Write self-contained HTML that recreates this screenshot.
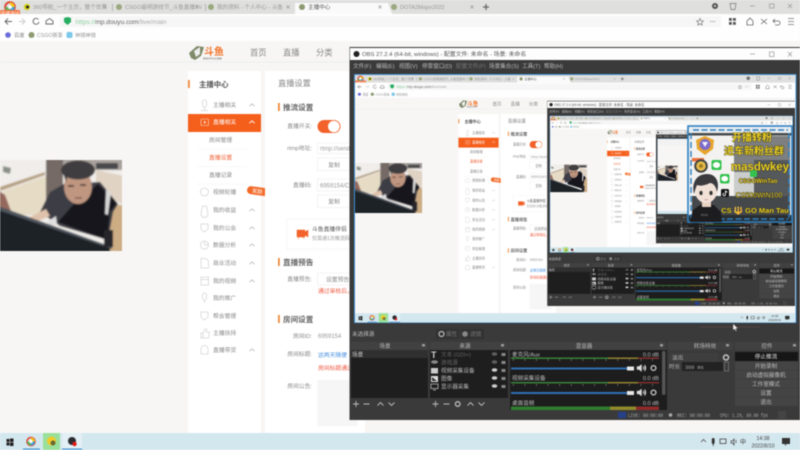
<!DOCTYPE html>
<html><head><meta charset="utf-8"><title>OBS</title>
<style>
html,body{margin:0;padding:0;width:800px;height:450px;overflow:hidden;background:#f7f6f5}
svg{display:block;filter:blur(.55px)}
text{font-family:"Liberation Sans","Noto Sans CJK SC",sans-serif;font-size:5.8px;fill:#888}
.m{text-anchor:middle}.e{text-anchor:end}
.b{font-weight:700}
.h{font-size:7.6px;font-weight:700;fill:#666}
.w{fill:#fff}
.o{fill:#bdbdbd;font-size:5.6px}
.d{fill:#777;font-size:5.6px}
.c{font-family:"Liberation Mono","Noto Sans CJK SC",monospace;fill:#aaa;font-size:5.2px}
.g{font-weight:700;fill:#f0d420;stroke:#222;stroke-width:.7px;paint-order:stroke}
.l{fill:none;stroke:#999;stroke-width:.7}
.k{fill:none;stroke:#bbb;stroke-width:.7}
.y{fill:none;stroke:#ddd;stroke-width:.9}
</style></head><body>
<svg width="800" height="450" viewBox="0 0 800 450" xmlns="http://www.w3.org/2000/svg">
<defs>
<filter id="soft" x="-2%" y="-2%" width="104%" height="104%"><feGaussianBlur stdDeviation=".9"/></filter>
<clipPath id="phc"><rect x="0" y="160" width="122" height="91"/></clipPath>
<path id="ch" d="M-2.6 1.2L0-1.2 2.6 1.2" fill="none" stroke="#bbb" stroke-width=".8"/>
<g id="ic"><circle r="3.6" fill="none" stroke="#ccc" stroke-width=".8"/></g>
<g id="ring"><circle r="4" fill="none" stroke="#e04030" stroke-width="1.6"/><path d="M0 0L0-4A4 4 0 0 1 4 0Z" fill="#f5c518"/><path d="M0 0L4 0A4 4 0 0 1 0 4Z" fill="#3aa5e0"/><path d="M0 0L0 4A4 4 0 0 1-4 0Z" fill="#5cb85c"/><circle r="1.6" fill="#fff"/></g>

<g id="ph" clip-path="url(#phc)"><g filter="url(#soft)">
<rect x="-2" y="158" width="126" height="95" fill="#f0edea"/>
<rect x="1" y="163" width="13" height="15" fill="#f1efea" transform="rotate(-10 7 170)"/>
<path d="M3 166l8 2-1 6-7-2z" fill="#8a9088"/>
<path d="M0 187L45 172V175L0 191Z" fill="#b5a083"/>
<path d="M3 191L46 176V215L3 215Z" fill="#e6dcc6"/>
<path d="M-2 190L5 195L11 211L-2 207Z" fill="#94675c"/>
<rect x="46" y="158" width="17" height="44" fill="#746a65"/>
<rect x="63" y="158" width="60" height="12" fill="#a9a29c"/>
<rect x="96" y="163" width="22" height="6" fill="#4a494b"/>
<path d="M96 170L124 176V205L96 190Z" fill="#e0d3c4"/>
<path d="M106 205H124V253H106Z" fill="#cdad84"/>
<path d="M40 212L50 192L64 184L100 182L118 204L113 212L108 240L60 226Z" fill="#3c3d44"/>
<path d="M72 206L98 184L117 203L110 212L107 240L58 222Z" fill="#15161a"/>
<path d="M106 190L111 192L108 215L105 214Z" fill="#d8d8d8"/>
<path d="M28 218L46 209L50 216L36 222Z" fill="#dfc2ac"/>
<path d="M47 222L56 216L57 224L50 226Z" fill="#e0e0e0"/>
<ellipse cx="78" cy="187" rx="14" ry="17" fill="#bf9680"/>
<ellipse cx="78" cy="170" rx="17" ry="9.500" fill="#3f3e41"/>
<path d="M62 170L66 182L68 172Z" fill="#3f3e41"/>
<path d="M68 186h6M80 185h6" stroke="#3a2a26" stroke-width="1.500"/>
<path d="M75 198h7" stroke="#6e4a42" stroke-width="1.200"/>
<path d="M-2 208L110 247V253H-2Z" fill="#1d2026"/>
<path d="M-2 206L112 247V249L-2 210Z" fill="#4e555d"/>
<rect x="104" y="230" width="9" height="17" fill="#26272b"/>
</g></g>

<g id="pg">
<rect width="800" height="450" fill="#f7f6f5"/>
<!-- tabs -->
<rect width="800" height="14" fill="#dfdfde"/>
<path d="M295 14V3H388L392 14Z" fill="#fafafa"/>
<g fill="#aaa"><rect x="112" y="4" width=".8" height="7"/><rect x="205" y="4" width=".8" height="7"/></g>
<use href="#ring" transform="translate(10 7) scale(1.2)"/>
<rect x="0" y="10" width="20" height="6" rx="1" fill="#f0703a"/><text x="10" y="15" class="m w" style="font-size:4.6px">直播测试</text>
<circle cx="27" cy="7" r="3.200" fill="#d6d21c"/><circle cx="27.500" cy="7" r="1.500" fill="#222"/>
<text x="33" y="9.200" style="font-size:5.6px;fill:#999">360导航_一个主页，整个世界</text>
<path d="M103.500 5.500l3 3m0-3l-3 3" class="l"/>
<circle cx="119" cy="7" r="3" fill="#9aa97f"/>
<text x="125" y="9.200" style="font-size:5.6px;fill:#999">CSGO最明游技节_斗鱼直播TV</text>
<path d="M195.500 5.500l3 3m0-3l-3 3" class="l"/>
<circle cx="211" cy="7" r="3" fill="#9aa97f"/>
<text x="217" y="9.200" style="font-size:5.6px;fill:#999">我的资料 - 个人中心 - 斗鱼</text>
<path d="M286.500 5.500l3 3m0-3l-3 3" class="l"/>
<circle cx="302" cy="7" r="3" fill="#8d9a72"/>
<text x="308" y="9.200" style="font-size:5.6px;fill:#555">主播中心</text>
<path d="M378.500 5.500l3 3m0-3l-3 3" class="l"/>
<circle cx="394" cy="7" r="3" fill="#9aa97f"/>
<text x="400" y="9.200" style="font-size:5.6px;fill:#999">DOTA2Major2022</text>
<path d="M470.500 5.500l3 3m0-3l-3 3" class="l"/>
<path d="M483 7h6M486 4v6" stroke="#666" stroke-width="1.200" fill="none"/>
<circle cx="715" cy="6" r="3" fill="#555"/><circle cx="715" cy="6" r="1" fill="#ddd"/>
<path d="M730 3.500h6l-1 6h-4z" fill="none" stroke="#777" stroke-width=".7"/>
<path d="M750 6h5" class="l"/><rect x="769.500" y="4" width="4.500" height="4" class="l"/><path d="M788 4l4 4m0-4l-4 4" class="l"/>
<!-- address -->
<rect y="14" width="800" height="14" fill="#fefefe"/>
<rect x="60" y="16" width="661" height="11" fill="#f6f6f6"/>
<path d="M12 21.500H5M8 18.500L5 21.500L8 24.500" fill="none" stroke="#666" stroke-width=".9"/>
<path d="M25 21.500H19M22 18.500L25 21.500L22 24.500" fill="none" stroke="#ccc" stroke-width=".9"/>
<path d="M38.500 19.500A3 3 0 1 0 39 22" fill="none" stroke="#666" stroke-width=".9"/>
<path d="M46 24v-3l3.500-2.500L53 21v3z" fill="none" stroke="#666" stroke-width=".9"/>
<path d="M64 18l3.500-1 3.500 1v4l-3.500 3-3.500-3z" fill="#27ae60"/>
<text x="75.500" y="24" style="font-size:6.600px;fill:#aaa"><tspan style="fill:#8fd0a0;font-size:6.600px">https://</tspan><tspan style="fill:#666;font-size:6.600px">mp.douyu.com</tspan>/live/main</text>
<path d="M700 18.500l1 2.200 2.400.3-1.800 1.600.5 2.400-2.100-1.200-2.100 1.200.5-2.400-1.800-1.600 2.400-.3z" fill="none" stroke="#777" stroke-width=".7"/>
<path d="M710 21.500h6" stroke="#888" stroke-width=".9" stroke-dasharray="1 1"/>
<g fill="#555"><rect x="729" y="18" width="2.800" height="2.800"/><rect x="733" y="18" width="2.800" height="2.800"/><rect x="729" y="22" width="2.800" height="2.800"/><rect x="733" y="22" width="2.800" height="2.800"/></g>
<path d="M747 25v-4l3-3 3 3v4z" fill="none" stroke="#666" stroke-width=".8"/>
<path d="M761 19l6 5m0-5l-6 5" fill="none" stroke="#666" stroke-width=".8"/>
<path d="M775 19l-2 2 2 2M773 21h5a2 2 0 0 1 0 4h-3" fill="none" stroke="#666" stroke-width=".8"/>
<path d="M788 18.500h6M788 21.500h6M788 24.500h6" fill="none" stroke="#777" stroke-width=".8"/>
<!-- bookmarks -->
<rect y="28" width="800" height="13" fill="#fefefe"/>
<circle cx="8" cy="35" r="2.800" fill="#6a6ad8"/><text x="14" y="37" style="fill:#888;font-size:5.200px">百度</text>
<circle cx="31.500" cy="35" r="3" fill="#8d9a72"/><text x="37" y="37" style="fill:#999;font-size:5.200px">CSGO赛事</text>
<rect x="66.500" y="32" width="6" height="6" rx="1.500" fill="#7cc8ea"/><text x="75" y="37" style="fill:#999;font-size:5.200px">神镜神镜</text>
<!-- header -->
<path d="M0 62H800" stroke="#ebebeb" stroke-width=".8"/>
<path d="M189 53L197 46L204 47L201 56L195 60L191 58Z" fill="#7f8a6a"/><path d="M194 51L200 47L200 54L196 57Z" fill="#eee"/>
<text x="204" y="55" class="b" style="font-size:10px;fill:#f2762d">斗鱼</text>
<text x="203" y="59.500" class="b" style="font-size:3px;fill:#777">DOUYU.COM</text>
<text x="250" y="55.500" style="font-size:8.300px;fill:#888">首页</text>
<text x="283" y="55.500" style="font-size:8.300px;fill:#888">直播</text>
<text x="316" y="55.500" style="font-size:8.300px;fill:#888">分类</text>
<!-- sidebar -->
<rect x="188" y="71" width="73" height="362" fill="#fff"/>
<rect x="188" y="80" width="1.800" height="8" fill="#f08a3c"/>
<text x="199" y="87" class="b" style="font-size:7.400px;fill:#555">主播中心</text>
<g><rect x="188" y="114" width="73" height="18" fill="#f55f1c"/>
<rect x="201" y="119" width="7.500" height="6.500" rx="1" fill="none" stroke="#fff" stroke-width=".6" opacity=".8"/>
<path d="M204 120.500l2.200 1.700-2.200 1.700z" fill="#fff" opacity=".8"/>
<path d="M-2.600 1.200L0-1.200 2.600 1.200" transform="translate(252 122)" fill="none" stroke="#fff" stroke-width=".9"/></g>
<g>
<text x="213" y="107">主播相关</text><use href="#ch" x="252" y="105"/>
<text x="213" y="124.200" class="w">直播相关</text>
<text x="209" y="142">房间管理</text>
<text x="209" y="159.500" style="fill:#f0653a">直播设置</text>
<text x="209" y="177">直播记录</text>
<text x="213" y="194">视频轮播</text>
<text x="213" y="212">我的收益</text><use href="#ch" x="252" y="210"/>
<text x="213" y="230">我的公会</text><use href="#ch" x="252" y="228"/>
<text x="213" y="247">数据分析</text><use href="#ch" x="252" y="245"/>
<text x="213" y="265">商业活动</text><use href="#ch" x="252" y="263"/>
<text x="213" y="283">我的视频</text><use href="#ch" x="252" y="281"/>
<text x="213" y="300">我的推广</text>
<text x="213" y="318">帮会管理</text>
<text x="213" y="335">主播扶持</text>
<text x="213" y="352">直播带货</text><use href="#ch" x="252" y="350"/>
</g>
<path d="M197 149h50M197 166.500h50M197 184h50" stroke="#f3f3f3" stroke-width=".6"/>
<g fill="none" stroke="#d5d5d5" stroke-width=".8">
<rect x="202.500" y="100" width="4" height="7" rx="2"/><path d="M204.500 107v3M201 110.500h7"/>
<circle cx="204.500" cy="192" r="4"/>
<path d="M202.500 206h4l1.500 8a3 3 0 0 1-7 0z"/>
<path d="M201 224h7v5l-3.500 3-3.500-3z"/>
<circle cx="204.500" cy="245" r="4"/><path d="M204.500 245v-4M204.500 245h4"/>
<path d="M201 258.500h5l2.500 2.500v7h-7.500z"/>
<rect x="201" y="277" width="7.500" height="8"/><path d="M201 279.500h7.500"/>
<rect x="202.500" y="293" width="4" height="7" rx="2"/><path d="M204.500 300v3"/>
<path d="M201 312h7v5l-3.500 3-3.500-3z"/>
<path d="M201 333h2v5h-2zM203 333l2-4h1.500v3h3l-1 6h-5.500z"/>
<path d="M201 354v-5a3.500 3.500 0 0 1 7 0v5z"/>
</g>
<g transform="rotate(8 257 190.500)"><rect x="247" y="187" width="21" height="8" rx="4" fill="#f36a28"/><text x="257.500" y="193" class="m w" style="font-size:5.200px">奖励</text></g>
<!-- content -->
<rect x="265" y="71" width="100" height="362" fill="#fff"/>
<text x="278" y="86" style="font-size:8.200px;fill:#888">直播设置</text>
<rect x="278" y="103" width="1.800" height="8" fill="#ee8a3a"/><text x="283" y="110" class="h">推流设置</text>
<text x="312" y="128" class="e">直播开关:</text>
<rect x="317.500" y="120" width="23" height="13" rx="6.500" fill="#f2622a"/><circle cx="333.800" cy="126.500" r="5.800" fill="#fff"/>
<text x="312" y="150" class="e">rtmp地址:</text>
<rect x="317.500" y="143" width="60" height="10.500" fill="#fff" stroke="#eee" stroke-width=".7"/>
<text x="320" y="150.500" style="font-size:6px;fill:#999">rtmp://send1.douyu.com</text>
<rect x="317.500" y="158" width="33" height="12.500" fill="#fff" stroke="#eee" stroke-width=".7"/><text x="334" y="167" class="m">复制</text>
<text x="312" y="187" class="e">直播码:</text>
<rect x="317.500" y="179" width="60" height="12" fill="#fff" stroke="#eee" stroke-width=".7"/>
<text x="320" y="187.500" style="font-size:6px;fill:#999">6959154/CvSd</text>
<rect x="317.500" y="195" width="33" height="12.500" fill="#fff" stroke="#eee" stroke-width=".7"/><text x="334" y="203.500" class="m">复制</text>
<rect x="287" y="219" width="90" height="30" fill="#fff" stroke="#f2f2f2" stroke-width=".7"/>
<path d="M297 230h8v7h-8zM305 232l3-2v7l-3-2zM299 237l-1 2M303 237l1 2" fill="#f2622a" stroke="#f2622a" stroke-width=".5"/>
<text x="312" y="231" style="font-size:5.800px;fill:#555">斗鱼直播伴侣</text>
<text x="312" y="240" style="font-size:5px;fill:#999">仅需通1次推流码</text>
<rect x="278" y="258" width="1.800" height="8" fill="#ee8a3a"/><text x="283" y="265" class="h">直播预告</text>
<text x="312" y="281" class="e">直播预告:</text>
<rect x="317.500" y="273" width="40" height="12" fill="#fff" stroke="#eee" stroke-width=".7"/><text x="326" y="281.500">设置预告</text>
<text x="318" y="293" style="fill:#ee5a40">通过审核后，</text>
<rect x="278" y="315" width="1.800" height="8" fill="#ee8a3a"/><text x="283" y="322" class="h">房间设置</text>
<text x="312" y="338" class="e">房间ID:</text><text x="318" y="338" style="font-size:6px;fill:#999">6959154</text>
<text x="312" y="356" class="e">房间标题:</text><text x="318" y="357" style="fill:#4a90e2">这两天随便</text>
<text x="318" y="370" style="fill:#ee5a40">房间标题通过</text>
<text x="312" y="388" class="e">房间公告:</text>
<rect x="317.500" y="380" width="40" height="46" fill="#f6f6f6"/>
<use href="#ph"/>
<!-- taskbar -->
<rect y="433" width="800" height="17" fill="#d3e7ee"/>
<g fill="#222"><rect x="6.500" y="439" width="3" height="3"/><rect x="10" y="438.500" width="3.500" height="3.500"/><rect x="6.500" y="442.500" width="3" height="3"/><rect x="10" y="442.500" width="3.500" height="3.500"/></g>
<use href="#ring" transform="translate(31 441.500)"/><rect x="23" y="448.500" width="17" height="1.200" fill="#3f8fd0"/>
<rect x="43" y="433" width="17" height="17" fill="#9ae09a"/><circle cx="51.500" cy="441" r="4.500" fill="#f1cb2a"/><circle cx="53" cy="443" r="2.500" fill="#6a6a30"/>
<rect x="62" y="433" width="20" height="17" fill="#e2eff4"/><circle cx="72" cy="441" r="4" fill="#2b2b30"/><circle cx="74.500" cy="444" r="2.200" fill="#e01818"/><rect x="62" y="448.500" width="20" height="1.200" fill="#3f8fd0"/>
<path d="M701 442l2.500-2.500 2.500 2.500" fill="none" stroke="#555" stroke-width=".8"/>
<rect x="711.800" y="438" width="2.800" height="6" rx="1.400" fill="#333"/><path d="M713.200 444v2" stroke="#333" stroke-width=".8"/>
<rect x="720" y="439" width="6" height="4.500" fill="none" stroke="#444" stroke-width=".8"/>
<path d="M731 441h1.500l1.500-2v6l-1.500-2H731zM735.500 440a2 2 0 0 1 0 3" fill="none" stroke="#444" stroke-width=".7"/>
<text x="743" y="444" class="m" style="fill:#333;font-size:6px">中</text>
<text x="763" y="440" class="m" style="fill:#444;font-size:5.200px">14:38</text>
<text x="763" y="447.500" class="m" style="fill:#444;font-size:5.200px">2022/8/10</text>
<path d="M782 438h8v6h-3.500l-1.500 2v-2h-3z" fill="#333"/>
</g>

<g id="ob">
<rect x="349.500" y="47" width="450.500" height="373" fill="#3a3a3a"/>
<rect x="350" y="48" width="450" height="12" fill="#fdfdfd"/>
<circle cx="356.500" cy="54" r="3" fill="#222"/>
<text x="362" y="56.200" style="font-size:5.900px;fill:#555">OBS 27.2.4 (64-bit, windows) - 配置文件: 未命名 - 场景: 未命名</text>
<path d="M750 54h5" class="l"/><rect x="769.500" y="52" width="4.500" height="4.500" class="l"/><path d="M788 52l4 4.500m0-4.500l-4 4.500" class="l"/>
<text x="353" y="68.200" class="o">文件(F)</text><text x="376" y="68.200" class="o">编辑(E)</text><text x="399" y="68.200" class="o">视图(V)</text><text x="422" y="68.200" class="o">停靠窗口(D)</text><text x="456" y="68.200" class="d">配置文件(P)</text><text x="489" y="68.200" class="o">场景集合(S)</text><text x="522" y="68.200" class="o">工具(T)</text><text x="544" y="68.200" class="o">帮助(H)</text>
<rect x="354.500" y="74.500" width="441.500" height="248" fill="#f7f6f5" stroke="#3f8fd0"/>
<text x="352" y="336" class="o">未选择源</text>
<rect x="436" y="329" width="23" height="10" fill="#333"/><rect x="461" y="329" width="23" height="10" fill="#333"/>
<circle cx="441.500" cy="334" r="2.500" fill="none" stroke="#bbb" stroke-width="1.200"/><text x="446" y="336" class="d">属性</text>
<circle cx="465" cy="334" r="2.800" fill="#888"/><text x="470" y="336" class="d">滤镜</text>
<rect x="351" y="342" width="77" height="8" fill="#414141"/><rect x="430" y="342" width="78" height="8" fill="#414141"/><rect x="509" y="342" width="157" height="8" fill="#414141"/><rect x="668" y="342" width="65" height="8" fill="#414141"/><rect x="735" y="342" width="65" height="8" fill="#414141"/>
<text x="385" y="348" class="m o">场景</text><text x="465" y="348" class="m o">来源</text><text x="584" y="348" class="m o">混音器</text><text x="705" y="348" class="m o">转场特效</text><text x="767" y="348" class="m o">控件</text>
<g fill="#999"><rect x="422" y="344" width="3" height="2.500"/><rect x="501" y="344" width="3" height="2.500"/><rect x="660" y="344" width="3" height="2.500"/><rect x="726" y="344" width="3" height="2.500"/><rect x="793" y="344" width="3" height="2.500"/></g>
<!-- scenes -->
<rect x="351" y="350" width="77" height="48" fill="#1e1e1e"/><rect x="351" y="350" width="77" height="8" fill="#303030"/>
<text x="352" y="356.300" style="fill:#ccc;font-size:5.600px">场景</text>
<path d="M353 404h6M356 401v6M363.500 404h6M377.500 405.500l3-3 3 3M388.500 402.500l3 3 3-3" fill="none" stroke="#bbb" stroke-width=".9"/>
<!-- sources -->
<rect x="430" y="350" width="78" height="48" fill="#1e1e1e"/>
<text x="431" y="358" class="b" style="font-size:9px;fill:#ccc">T</text>
<text x="441" y="356.300" style="fill:#666;font-size:5.600px">文本 (GDI+)</text>
<text x="441" y="364.300" style="fill:#666;font-size:5.600px">游戏源</text>
<text x="441" y="372.300" style="fill:#bbb;font-size:5.600px">视频采集设备</text>
<text x="441" y="380.300" style="fill:#bbb;font-size:5.600px">图像</text>
<text x="441" y="388.300" style="fill:#bbb;font-size:5.600px">显示器采集</text>
<ellipse cx="434.500" cy="362" rx="3.500" ry="1.800" fill="#888"/>
<rect x="431" y="368" width="7" height="5.500" fill="#ccc"/><rect x="431" y="376" width="7" height="6" fill="#ddd"/><path d="M432 377l5 4h-5z" fill="#333"/>
<rect x="431" y="384" width="7" height="4.500" fill="none" stroke="#ccc" stroke-width=".7"/><path d="M433 390h3" stroke="#ccc" stroke-width=".7"/>
<g fill="#888"><ellipse cx="494.500" cy="354" rx="2.800" ry="1.700" opacity=".6"/><ellipse cx="494.500" cy="362" rx="2.800" ry="1.700" opacity=".6"/><ellipse cx="494.500" cy="370" rx="2.800" ry="1.700" fill="#ccc"/><ellipse cx="494.500" cy="378" rx="2.800" ry="1.700" fill="#ccc"/><ellipse cx="494.500" cy="386" rx="2.800" ry="1.700" fill="#ccc"/>
<rect x="501.500" y="353" width="4" height="3"/><rect x="501.500" y="361" width="4" height="3"/><rect x="501.500" y="369" width="4" height="3"/><rect x="501.500" y="377" width="4" height="3"/><rect x="501.500" y="385" width="4" height="3"/></g>
<path d="M432.500 404h6M435.500 401v6M443.500 404h6M467.500 405.500l3-3 3 3M478.500 402.500l3 3 3-3" fill="none" stroke="#bbb" stroke-width=".9"/>
<circle cx="457.700" cy="404" r="2.300" fill="none" stroke="#bbb" stroke-width="1.300"/>
<!-- mixer -->
<rect x="510" y="350" width="157" height="60" fill="#1d1d1d"/>
<rect x="662" y="351" width="3.500" height="44" rx="1.500" fill="#555"/>
<text x="512" y="356.300" class="o">麦克风/Aux</text><text x="659" y="356.300" class="e o">0.0 dB</text>
<rect x="511" y="357.500" width="97" height="1.400" fill="#3a8a3a"/><rect x="608" y="357.500" width="30" height="1.400" fill="#9a8a30"/><rect x="638" y="357.500" width="21" height="1.400" fill="#8a3030"/>
<path d="M513 360h146" stroke="#888" stroke-width="2" stroke-dasharray=".6 11"/>
<rect x="511" y="367.500" width="117" height="2" fill="#2f6fb5"/><rect x="627" y="366.500" width="7" height="4" fill="#e8e8e8"/>
<path d="M637 366.500h2l2.500-2v7l-2.500-2h-2zM643 366a3 3 0 0 1 0 4M644.500 364.500a5 5 0 0 1 0 7" fill="#ddd" stroke="#ddd" stroke-width=".4"/>
<circle cx="653.500" cy="368" r="2.400" fill="none" stroke="#ccc" stroke-width="1.300"/>
<text x="512" y="380" class="o">视频采集设备</text><text x="659" y="380" class="e o">0.0 dB</text>
<rect x="511" y="382" width="97" height="1.400" fill="#3a8a3a"/><rect x="608" y="382" width="30" height="1.400" fill="#9a8a30"/><rect x="638" y="382" width="21" height="1.400" fill="#8a3030"/>
<path d="M513 385h146" stroke="#888" stroke-width="2" stroke-dasharray=".6 11"/>
<rect x="511" y="392" width="117" height="2" fill="#2f6fb5"/><rect x="627" y="391" width="7" height="4" fill="#e8e8e8"/>
<path d="M637 391h2l2.500-2v7l-2.500-2h-2zM643 390.500a3 3 0 0 1 0 4M644.500 389a5 5 0 0 1 0 7" fill="#ddd" stroke="#ddd" stroke-width=".4"/>
<circle cx="653.500" cy="392.500" r="2.400" fill="none" stroke="#ccc" stroke-width="1.300"/>
<text x="512" y="405" class="o">桌面音频</text><text x="659" y="405" class="e o">0.0 dB</text>
<rect x="511" y="406.500" width="99" height="3.500" fill="#2f7d2f"/><rect x="610" y="406.500" width="26" height="3.500" fill="#8f8a2a"/><rect x="636" y="406.500" width="23" height="3.500" fill="#8f2a2a"/>
<!-- transitions -->
<rect x="669" y="353" width="49" height="9" fill="#3e3e3e"/><text x="672" y="359.700" class="o">淡出</text>
<circle cx="726" cy="357.500" r="2.500" fill="none" stroke="#ccc" stroke-width="1.400"/>
<text x="669" y="368.700" class="o">时长</text>
<rect x="682" y="362" width="41" height="9" fill="#222"/><text x="685" y="368.800" class="c">300 ms</text>
<rect x="724.500" y="362" width="4" height="9" fill="none" stroke="#888" stroke-width=".6"/>
<!-- controls -->
<rect x="735" y="352" width="63" height="9" fill="#161616"/><text x="766" y="358.600" class="m o" style="fill:#e4e4e4">停止推流</text>
<g fill="#444"><rect x="735" y="361.500" width="63" height="8.500"/><rect x="735" y="370.500" width="63" height="8.500"/><rect x="735" y="379.500" width="63" height="8.500"/><rect x="735" y="388.500" width="63" height="8.500"/><rect x="735" y="397.500" width="63" height="8.500"/></g>
<text x="766" y="367.800" class="m o">开始录制</text><text x="766" y="376.800" class="m o">启动虚拟摄像机</text><text x="766" y="385.800" class="m o">工作室模式</text><text x="766" y="394.800" class="m o">设置</text><text x="766" y="403.800" class="m o">退出</text>
<!-- status -->
<rect x="618" y="412" width="8" height="6" fill="#27408a"/>
<text x="628" y="417" class="c" textLength="35" lengthAdjust="spacingAndGlyphs">LIVE: 00:00:00</text><circle cx="670.500" cy="415" r="1.800" fill="#aaa"/><text x="677" y="417" class="c" textLength="33" lengthAdjust="spacingAndGlyphs">REC: 00:00:00</text><text x="720" y="417" class="c" textLength="48" lengthAdjust="spacingAndGlyphs">CPU: 1.2%, 60.00 fps</text>
<rect x="778" y="411" width="8" height="8" fill="#444"/>
</g>

<g id="l4">
<rect width="800" height="450" fill="#f7f6f5"/><rect width="800" height="41" fill="#f2f2f2"/>
<rect x="188" y="71" width="73" height="362" fill="#fff"/><rect x="188" y="114" width="73" height="18" fill="#f55f1c"/>
<rect x="265" y="71" width="85" height="362" fill="#fff"/>
<use href="#ph"/>
<rect y="433" width="800" height="17" fill="#d3e7ee"/>
<rect x="350" y="47" width="450" height="373" fill="#3a3a3a"/><rect x="355" y="75" width="441" height="247" fill="#eee"/>
</g>

<g id="l3"><use href="#pg"/><use href="#ob"/><g transform="translate(355 75) scale(.55)"><use href="#l4"/></g></g>
<g id="l2"><use href="#pg"/><use href="#ob"/><g transform="translate(355 75) scale(.55)"><use href="#l3"/></g></g>
</defs>

<use href="#pg"/>
<use href="#ob"/>
<g transform="translate(355 75) scale(.55)"><use href="#l2"/></g>

<!-- stream overlay -->
<g>
<rect x="688" y="126" width="104" height="96" fill="#e8edf1"/>
<rect x="688" y="133" width="104" height="2.500" fill="#4a4a4a"/>
<rect x="692" y="136" width="42" height="60" fill="#f3f2f0"/>
<rect x="734" y="136" width="56" height="86" fill="#7d7f80"/>
<rect x="734" y="172" width="20" height="28" fill="#e6e6e6" opacity=".75"/>
<rect x="754" y="160" width="36" height="40" fill="#55595c"/>
<rect x="692" y="196" width="98" height="26" fill="#45484b"/>
<rect x="688" y="215" width="104" height="7" fill="#2a2e31"/>
<rect x="688" y="126" width="104" height="96" fill="none" stroke="#2e7fbf" stroke-width="1.600"/>
<path d="M693 130H788" stroke="#2e7fbf" stroke-width="1.600" stroke-dasharray="6 2.500"/>
<path d="M691 133V218" stroke="#2e7fbf" stroke-width="1.400" stroke-dasharray="6 3"/>
<path d="M789 133V218" stroke="#2e7fbf" stroke-width="1.400" stroke-dasharray="6 3"/>
<path d="M693 219H788" stroke="#2e7fbf" stroke-width="1.400" stroke-dasharray="6 2.500"/>
<!-- medal -->
<path d="M696 140L705 136L714 140L713 149L705 155L697 149Z" fill="#e8a52c"/><circle cx="705" cy="144.500" r="5.500" fill="#7d6bc9"/><path d="M702 142h6l-3 5z" fill="#f2f2ff"/>
<rect x="692" y="158" width="12" height="3.500" fill="#f0703a"/>
<circle cx="701" cy="166" r="6.800" fill="#444"/><circle cx="701" cy="166" r="4.800" fill="#e4bc4a"/><circle cx="701" cy="166" r="2" fill="#a27e20"/>
<!-- wechat -->
<rect x="711.500" y="160" width="10" height="10" rx="2" fill="#33c24d"/><ellipse cx="716.500" cy="165" rx="3.600" ry="3" fill="#fff"/>
<rect x="720" y="174" width="9.500" height="9.500" rx="2" fill="#33c24d"/><ellipse cx="724.700" cy="178.700" rx="3.400" ry="2.800" fill="#fff"/>
<rect x="721" y="189" width="8" height="8" rx="1.500" fill="#111"/><path d="M725.500 190.500v4a1.300 1.300 0 1 1-1.300-1.300M725.500 190.500c.3 1 1 1.500 2 1.600" fill="none" stroke="#fff" stroke-width=".8"/>
<rect x="750" y="170" width="7" height="7" rx="1.500" fill="#33c24d"/>
<!-- avatar -->
<path d="M690 222L693 210L700 205H714L721 212L722 222Z" fill="#1d1d20"/>
<text x="701" y="216" style="font-size:2.500px;fill:#999">ROCK</text>
<rect x="702" y="200" width="9" height="7" fill="#e8d2c2"/>
<ellipse cx="706" cy="191" rx="11" ry="12" fill="#f1e1d6"/>
<path d="M694 194C691 181 698 174 707 174C716 174 720 182 717 192C716 186 713 183 710 183C704 186 699 186 697 185C696 187 695 190 694 194Z" fill="#3b3b3e"/>
<ellipse cx="701" cy="193" rx="1.600" ry="2.100" fill="#333"/><ellipse cx="711" cy="193" rx="1.600" ry="2.100" fill="#333"/>
<path d="M704.500 199.500q1.800 1 3.500 0" stroke="#a66" stroke-width=".5" fill="none"/>
<!-- text -->
<text x="752" y="141" class="m g" style="font-size:10px">开播转粉</text>
<text x="754" y="154.500" class="m g" style="font-size:10px">进车新粉丝群</text>
<text x="760" y="170.500" class="m g" style="font-size:11.500px">masdwkey</text>
<text x="758" y="183" class="m g" style="font-size:6px">CSGOWinTao</text>
<text x="759" y="197.500" class="m g" style="font-size:7px;font-weight:400">CS500WIN100</text>
<text x="755" y="213" class="m g" style="font-size:7.500px">CS 🔱 GO Man Tau</text>
</g>

<!-- cursor -->
<path d="M733 323.500v7l1.700-1.500 1.200 2.500 1-.5-1.100-2.400h2.200z" fill="#fff" stroke="#222" stroke-width=".4"/>
<path d="M700 327H760" stroke="#c77" stroke-width=".6" opacity=".35"/>
</svg>
</body></html>
